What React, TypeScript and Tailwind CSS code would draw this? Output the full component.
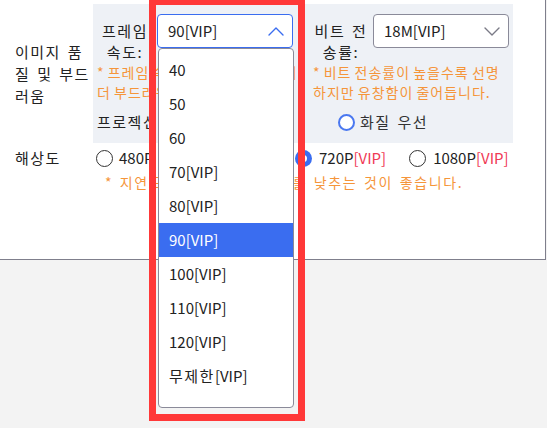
const Radio = ({ checked = false, focus = false }: { checked?: boolean; focus?: boolean }) => {
  if (checked) {
    return (
      <span className="w-[17px] h-[17px] rounded-full bg-[#3a6df0] flex items-center justify-center shrink-0">
        <span className="w-[7px] h-[7px] rounded-full bg-white"></span>
      </span>
    );
  }
  if (focus) {
    return <span className="w-[17px] h-[17px] rounded-full border-2 border-[#4a78f0] bg-white shrink-0"></span>;
  }
  return <span className="w-[17px] h-[17px] rounded-full border border-[#333] bg-white shrink-0"></span>;
};

const Chevron = ({ up = false, color }: { up?: boolean; color: string }) => (
  <svg width="16" height="9" viewBox="0 0 16 9" fill="none" stroke={color} strokeWidth="1.4" strokeLinecap="round" strokeLinejoin="round">
    {up ? <polyline points="1,8 8,1 15,8" /> : <polyline points="1,1 8,8 15,1" />}
  </svg>
);

// 한글 텍스트 폭 보정
const ko = 'tracking-[1.5px] [word-spacing:2px]';
const hint = 'text-[14px] leading-[20px] text-[#f5953a] whitespace-nowrap';

const App = () => {
  const frameRates = ['40', '50', '60', '70[VIP]', '80[VIP]', '90[VIP]', '100[VIP]', '110[VIP]', '120[VIP]'];

  return (
    <div className="relative w-[547px] h-[428px] bg-[#f3f3f3] overflow-hidden text-[15px] text-[#222] font-['Noto_Sans_CJK_KR','Noto_Sans',sans-serif]">
      <div className="w-[546px] h-[260px] bg-white border-r border-b border-[#7f7f8c]">
        {/* 이미지 품질 */}
        <div className="flex pt-[4px]">
          <div className={`w-[93px] pl-[15px] pr-[2px] self-center leading-[22px] ${ko}`}>이미지 품질 및 부드러움</div>
          <div className="w-[420px] h-[139px] bg-[#eef1f6] pl-[4px] pt-[10px]">
            <div className="flex gap-[20px]">
              {/* 프레임 속도 */}
              <div className="w-[196px]">
                <div className="flex gap-[4px]">
                  <div className={`w-[56px] text-center leading-[21px] pt-[6px] ${ko}`}>프레임 속도:</div>
                  <div className="w-[136px] h-[34px] border border-[#3a6df0] rounded-[4px] bg-white flex items-center justify-between pl-[10px] pr-[8px]">
                    <span>90[VIP]</span>
                    <Chevron up color="#3a6df0" />
                  </div>
                </div>
                <p className={`${hint} tracking-[1px] [word-spacing:-1px]`}>
                  * 프레임 속도가 높을수록 화면이
                  <br />
                  더 부드러워집니다.
                </p>
              </div>
              {/* 비트 전송률 */}
              <div className="w-[196px]">
                <div className="flex gap-[4px]">
                  <div className={`w-[56px] text-center leading-[21px] pt-[6px] ${ko}`}>비트 전송률:</div>
                  <div className="w-[136px] h-[34px] border border-[#8a8a99] rounded-[4px] bg-white flex items-center justify-between pl-[10px] pr-[8px]">
                    <span>18M[VIP]</span>
                    <Chevron color="#7a7a86" />
                  </div>
                </div>
                <p className={`${hint} tracking-[1px] [word-spacing:-1px]`}>
                  * 비트 전송률이 높을수록 선명
                  <br />
                  하지만 유창함이 줄어듭니다.
                </p>
              </div>
            </div>
            <div className={`flex items-center mt-[9px] leading-[22px] ${ko}`}>
              <span className="w-[94px] whitespace-nowrap">프로젝션 모드:</span>
              <div className="w-[147px] flex items-center gap-[5px]">
                <Radio />
                <span className="text-[#333]">유창성 우선</span>
              </div>
              <div className="flex items-center gap-[5px]">
                <Radio focus />
                <span className="text-[#333]">화질 우선</span>
              </div>
            </div>
          </div>
        </div>

        {/* 해상도 */}
        <div className="flex items-center mt-[4px] leading-[22px]">
          <div className={`w-[93px] pl-[15px] ${ko}`}>해상도</div>
          <div className="flex items-center pl-[3px]">
            <div className="w-[82px] flex items-center gap-[6px]">
              <Radio />
              <span>480P</span>
            </div>
            <div className="w-[117px] flex items-center gap-[6px]">
              <Radio />
              <span>
                540P<span className="text-[#f03a55]">[VIP]</span>
              </span>
            </div>
            <div className="flex items-center gap-[7px] mr-[23px]">
              <Radio checked />
              <span>
                720P<span className="text-[#f03a55]">[VIP]</span>
              </span>
            </div>
            <div className="flex items-center gap-[7px]">
              <Radio />
              <span>
                1080P<span className="text-[#f03a55]">[VIP]</span>
              </span>
            </div>
          </div>
        </div>
        <p className={`ml-[105px] mt-[3px] ${hint} tracking-[1.6px] [word-spacing:2px]`}>* 지연도를 줄이려면 해상도를 낮추는 것이 좋습니다.</p>
      </div>

      {/* 열린 드롭다운 목록 */}
      <div className="absolute left-[158px] top-[48px] w-[136px] h-[360px] bg-white border border-[#8a8a99] rounded-[4px] pt-[4px]">
        {frameRates.map((rate) => (
          <div
            key={rate}
            className={`h-[34px] flex items-center pl-[10px] ${rate === '90[VIP]' ? 'bg-[#3a6df0] text-white' : ''}`}
          >
            {rate}
          </div>
        ))}
        <div className="h-[34px] flex items-center pl-[10px]">
          <span className="tracking-[1.5px]">무제한</span>[VIP]
        </div>
      </div>

      {/* 강조 표시 */}
      <div className="absolute left-[149px] top-[-2px] w-[156px] h-[423px] border-[7px] border-[#ff3838]"></div>
    </div>
  );
};

export default App;
